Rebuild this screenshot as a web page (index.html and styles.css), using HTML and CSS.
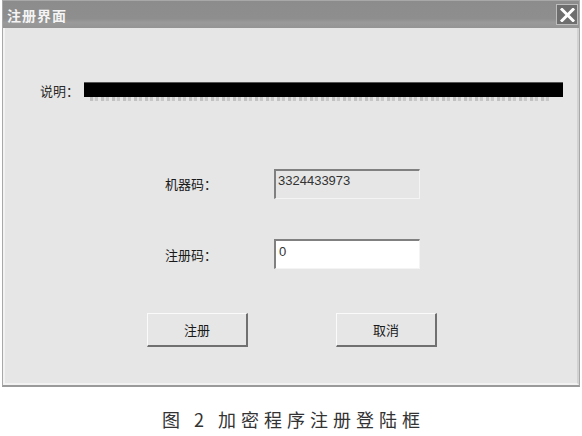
FILE: index.html
```html
<!DOCTYPE html>
<html>
<head>
<meta charset="utf-8">
<link rel="stylesheet" href="styles.css">
</head>
<body>
<div class="window">
  <div class="titlebar">
    <span class="title">注册界面</span>
    <span class="close"><svg width="15" height="14" viewBox="0 0 15 14"><path d="M2 1.5 L13 12.5 M13 1.5 L2 12.5" stroke="#fff" stroke-width="3" stroke-linecap="square"/></svg></span>
  </div>
  <div class="content">
    <div class="desc">
      <span class="label">说明：</span>
      <span class="redact"><span class="bar"></span><span class="residue"></span></span>
    </div>
    <div class="row row-machine">
      <span class="field-label">机器码：</span>
      <div class="box readonly">3324433973</div>
    </div>
    <div class="row row-reg">
      <span class="field-label">注册码：</span>
      <div class="box editable">0</div>
    </div>
    <div class="buttons">
      <div class="btn">注册</div>
      <div class="btn">取消</div>
    </div>
  </div>
</div>
<div class="caption">图 2 加密程序注册登陆框</div>
</body>
</html>
```
FILE: styles.css
```css
html, body {
  margin: 0;
  padding: 0;
  background: #ffffff;
}
body {
  font-family: "Noto Sans CJK SC", "Liberation Sans", sans-serif;
  width: 582px;
  height: 436px;
  overflow: hidden;
}
.window {
  margin-left: 2px;
  width: 578px;
  height: 387px;
  box-sizing: border-box;
  border: 1px solid #a8a8a8;
  border-bottom: 2px solid #9a9a9a;
  background: #e6e6e6;
  display: flex;
  flex-direction: column;
}
.titlebar {
  height: 27px;
  flex: none;
  background: linear-gradient(#8c8c8c 0%, #8e8e8e 65%, #9a9a9a 80%, #949494 100%);
  display: flex;
  align-items: center;
  justify-content: space-between;
  padding: 0 1px 0 4px;
}
.title {
  color: #f4f4f4;
  font-size: 14px;
  font-weight: bold;
  letter-spacing: 1px;
  line-height: 16px;
}
.close {
  width: 22px;
  height: 21px;
  box-sizing: border-box;
  background: #6e6e6e;
  border: 1px solid #bdbdbd;
  display: flex;
  align-items: center;
  justify-content: center;
}
.content {
  flex: 1;
  box-sizing: border-box;
  border-left: 2px solid #f2f2f2;
  border-right: 2px solid #d2d2d2;
  border-bottom: 2px solid #f2f2f2;
  display: flex;
  flex-direction: column;
  font-size: 13px;
  color: #1a1a1a;
}
.desc {
  margin-top: 54px;
  padding-left: 35px;
  display: flex;
  align-items: flex-start;
  height: 22px;
}
.desc .label {
  line-height: 16px;
  margin-top: 1px;
  width: 44px;
  color: #2a2a2a;
}
.redact {
  display: flex;
  flex-direction: column;
}
.bar {
  width: 479px;
  height: 14px;
  background: #000;
  border-top: 1px solid #555;
}
.residue {
  width: 460px;
  height: 4px;
  margin-left: 6px;
  background: repeating-linear-gradient(90deg, #a8a8a8 0 3px, #dcdcdc 3px 5px, #b4b4b4 5px 8px, #e6e6e6 8px 11px);
  opacity: 0.6;
}
.row {
  display: flex;
  align-items: center;
  padding-left: 160px;
}
.row-machine {
  margin-top: 65px;
}
.row-reg {
  margin-top: 40px;
}
.field-label {
  width: 109px;
  line-height: 16px;
  color: #1a1a1a;
}
.row-reg .field-label {
  margin-top: 2px;
}
.box {
  width: 146px;
  height: 30px;
  box-sizing: border-box;
  border-top: 2px solid #808080;
  border-left: 2px solid #808080;
  border-right: 1px solid #f4f4f4;
  border-bottom: 1px solid #f4f4f4;
  font-family: "Liberation Sans", sans-serif;
  font-size: 13px;
  line-height: 14px;
  padding: 3px 0 0 2px;
  color: #333;
}
.readonly {
  background: #e6e6e6;
}
.editable {
  background: #ffffff;
  padding-top: 4px;
  padding-left: 3px;
}
.buttons {
  margin-top: 44px;
  display: flex;
  padding-left: 142px;
  gap: 88px;
}
.btn {
  width: 101px;
  height: 34px;
  box-sizing: border-box;
  border-top: 1px solid #fafafa;
  border-left: 1px solid #fafafa;
  border-right: 2px solid #707070;
  border-bottom: 2px solid #707070;
  background: #e6e6e6;
  display: flex;
  align-items: center;
  justify-content: center;
  font-size: 13px;
  color: #1a1a1a;
}
.caption {
  margin-top: 21px;
  text-align: center;
  font-size: 18px;
  line-height: 22px;
  letter-spacing: 5px;
  color: #333;
  padding-left: 5px;
}
```
